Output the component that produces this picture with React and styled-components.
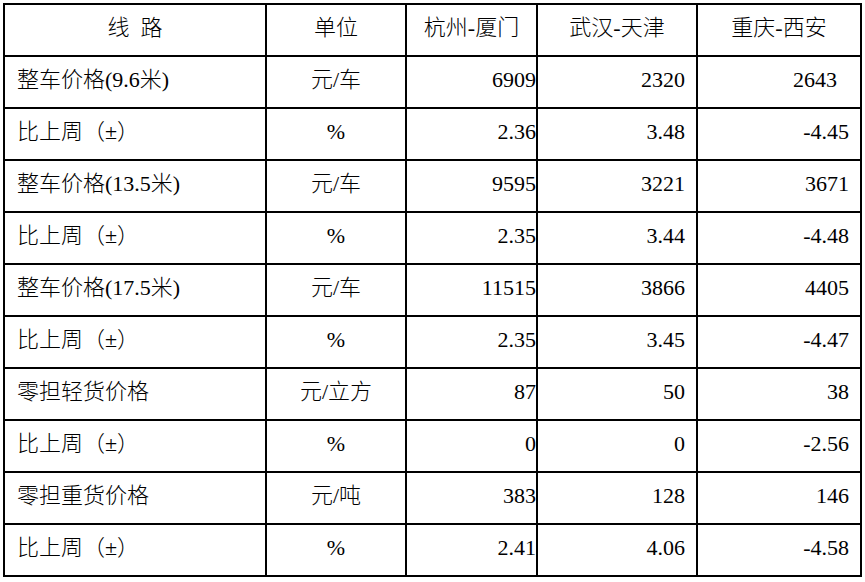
import React from "react";
import styled, { createGlobalStyle } from "styled-components";

const GlobalStyle = createGlobalStyle`
  html, body {
    margin: 0;
    padding: 0;
    background: #ffffff;
  }
  body {
    font-family: "Liberation Serif", "Noto Sans CJK SC", serif;
  }
`;

const columns = [
  { title: "线\u00a0\u00a0路", width: 262 },
  { title: "单位", width: 140 },
  { title: "杭州-厦门", width: 131 },
  { title: "武汉-天津", width: 160 },
  { title: "重庆-西安", width: 164 },
];

// inset = extra right padding on a cell (the 2643 cell sits further in)
const rows = [
  ["整车价格(9.6米)", "元/车", "6909", "2320", { v: "2643", inset: 12 }],
  ["比上周（±）", "%", "2.36", "3.48", "-4.45"],
  ["整车价格(13.5米)", "元/车", "9595", "3221", "3671"],
  ["比上周（±）", "%", "2.35", "3.44", "-4.48"],
  ["整车价格(17.5米)", "元/车", "11515", "3866", "4405"],
  ["比上周（±）", "%", "2.35", "3.45", "-4.47"],
  ["零担轻货价格", "元/立方", "87", "50", "38"],
  ["比上周（±）", "%", "0", "0", "-2.56"],
  ["零担重货价格", "元/吨", "383", "128", "146"],
  ["比上周（±）", "%", "2.41", "4.06", "-4.58"],
];

function App() {
  return (
    <>
      <GlobalStyle />
      <Page>
        <PriceTable>
          <colgroup>
            {columns.map((c, i) => (
              <col key={i} style={{ width: c.width }} />
            ))}
          </colgroup>
          <thead>
            <tr>
              {columns.map((c, i) => (
                <HeadCell key={i}>{c.title}</HeadCell>
              ))}
            </tr>
          </thead>
          <tbody>
            {rows.map((row, r) => (
              <tr key={r}>
                <LabelCell>{row[0]}</LabelCell>
                <UnitCell>{row[1]}</UnitCell>
                {row.slice(2).map((cell, c) => {
                  const value = typeof cell === "object" ? cell.v : cell;
                  const inset = typeof cell === "object" ? cell.inset : 0;
                  return (
                    <NumberCell key={c} $first={c === 0} $inset={inset}>
                      {value}
                    </NumberCell>
                  );
                })}
              </tr>
            ))}
          </tbody>
        </PriceTable>
      </Page>
    </>
  );
}

const Page = styled.div`
  padding: 3px 0 0 3px;
`;

const PriceTable = styled.table`
  border-collapse: collapse;
  table-layout: fixed;
  width: 858px;
  font-size: 22px;
  font-weight: 300;
  color: #000000;
  text-spacing-trim: space-all;

  td, th {
    border: 2px solid #000000;
    height: 52px;
    padding: 0 0 4px 0;
    box-sizing: border-box;
    white-space: nowrap;
    line-height: 1;
    font-weight: 300;
  }
`;

const HeadCell = styled.th`
  text-align: center;
`;

const LabelCell = styled.td`
  text-align: left;
  padding-left: 12px !important;
`;

const UnitCell = styled.td`
  text-align: center;
`;

const NumberCell = styled.td`
  text-align: right;
  padding-right: ${(p) => (p.$first ? 0 : 11 + p.$inset)}px !important;
`;

export default App;
